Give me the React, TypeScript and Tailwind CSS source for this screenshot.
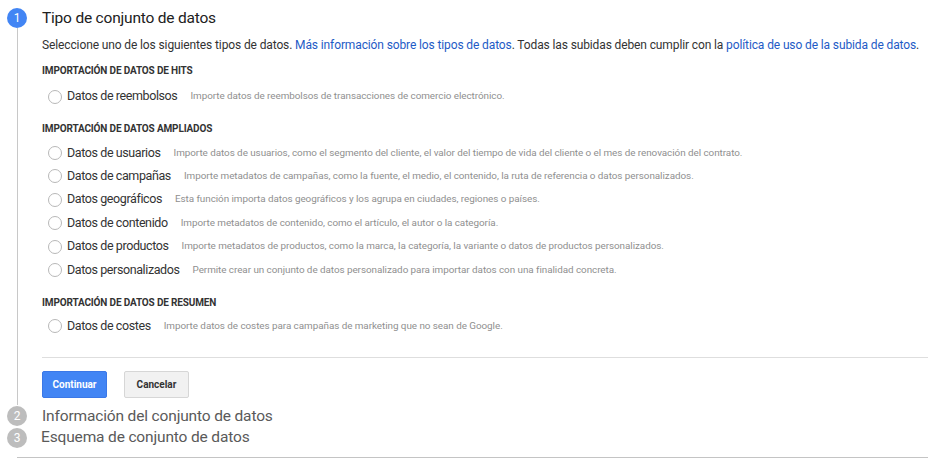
import React from 'react';

type Option = {label: string; desc: string};

const hits: Option[] = [
  {label: 'Datos de reembolsos', desc: 'Importe datos de reembolsos de transacciones de comercio electrónico.'},
];

const extended: Option[] = [
  {label: 'Datos de usuarios', desc: 'Importe datos de usuarios, como el segmento del cliente, el valor del tiempo de vida del cliente o el mes de renovación del contrato.'},
  {label: 'Datos de campañas', desc: 'Importe metadatos de campañas, como la fuente, el medio, el contenido, la ruta de referencia o datos personalizados.'},
  {label: 'Datos geográficos', desc: 'Esta función importa datos geográficos y los agrupa en ciudades, regiones o países.'},
  {label: 'Datos de contenido', desc: 'Importe metadatos de contenido, como el artículo, el autor o la categoría.'},
  {label: 'Datos de productos', desc: 'Importe metadatos de productos, como la marca, la categoría, la variante o datos de productos personalizados.'},
  {label: 'Datos personalizados', desc: 'Permite crear un conjunto de datos personalizado para importar datos con una finalidad concreta.'},
];

const summary: Option[] = [
  {label: 'Datos de costes', desc: 'Importe datos de costes para campañas de marketing que no sean de Google.'},
];

function RadioRow({label, desc}: Option) {
  return (
    <label className="flex items-center h-[23.4px] pl-[6px] cursor-pointer">
      <span className="w-[14px] h-[14px] rounded-full border border-[#b8b8b8] bg-white shrink-0" />
      <span className="ml-[5px] text-[12.5px] tracking-[-0.4px] text-[#333]">{label}</span>
      <span className="ml-[13px] text-[9.9px] tracking-[-0.05px] text-[#8f8f8f] whitespace-nowrap">{desc}</span>
    </label>
  );
}

function SectionTitle({children, className}: {children: React.ReactNode; className?: string}) {
  return <div className={'text-[10px] tracking-[-0.15px] leading-[14px] font-bold text-[#333] uppercase ' + (className || '')}>{children}</div>;
}

function StepCircle({n, active}: {n: number; active?: boolean}) {
  return (
    <div className={'w-[20px] h-[20px] rounded-full flex items-center justify-center text-[12px] text-white shrink-0 ' + (active ? 'bg-[#4285f4]' : 'bg-[#bdbdbd]')}>
      {n}
    </div>
  );
}

export default function App() {
  return (
    <div className="w-[928px] h-[472px] bg-white overflow-hidden pt-[8px]" style={{fontFamily: 'Roboto, "Liberation Sans", sans-serif'}}>
      {/* step 1 */}
      <div className="flex">
        <div className="w-[34px] flex flex-col items-center shrink-0">
          <StepCircle n={1} active />
          <div className="w-px flex-1 bg-[#c8c8c8]" />
        </div>
        <div className="flex-1 pl-[8px] pb-[7px]">
          <h2 className="text-[15.5px] tracking-[-0.2px] leading-[20px] text-[#212121]">Tipo de conjunto de datos</h2>
          <p className="mt-[8px] text-[12px] tracking-[-0.12px] leading-[18px] text-[#333] whitespace-nowrap">
            Seleccione uno de los siguientes tipos de datos.{' '}
            <a className="text-[#1e5bc6]">Más información sobre los tipos de datos</a>. Todas las subidas deben cumplir con la{' '}
            <a className="text-[#1e5bc6]">política de uso de la subida de datos</a>.
          </p>

          <SectionTitle className="mt-[10px]">Importación de datos de hits</SectionTitle>
          <div className="mt-[7px]">
            {hits.map(o => <RadioRow key={o.label} {...o} />)}
          </div>

          <SectionTitle className="mt-[14px]">Importación de datos ampliados</SectionTitle>
          <div className="mt-[5px]">
            {extended.map(o => <RadioRow key={o.label} {...o} />)}
          </div>

          <SectionTitle className="mt-[14px]">Importación de datos de resumen</SectionTitle>
          <div className="mt-[5px]">
            {summary.map(o => <RadioRow key={o.label} {...o} />)}
          </div>

          <div className="mt-[19px] h-px bg-[#dedede]" />

          <div className="mt-[13px] flex gap-[17px]">
            <button className="h-[27px] w-[65px] rounded-[2px] bg-[#4285f4] border border-[#3b78e7] text-white text-[10px] font-bold">
              Continuar
            </button>
            <button className="h-[27px] w-[65px] rounded-[2px] bg-[#f1f1f1] border border-[#d6d6d6] text-[#333] text-[10px] font-bold">
              Cancelar
            </button>
          </div>
        </div>
      </div>

      {/* step 2 */}
      <div className="flex items-center h-[22px]">
        <div className="w-[34px] flex justify-center shrink-0">
          <StepCircle n={2} />
        </div>
        <div className="pl-[8px] text-[15.5px] tracking-[-0.15px] text-[#5a5a5a]">Información del conjunto de datos</div>
      </div>

      {/* step 3 */}
      <div className="flex items-center h-[21px]">
        <div className="w-[34px] flex justify-center shrink-0">
          <StepCircle n={3} />
        </div>
        <div className="pl-[7px] text-[15.5px] tracking-[-0.15px] text-[#5a5a5a]">Esquema de conjunto de datos</div>
      </div>

      <div className="mt-[9px] ml-[17px] h-px bg-[#c4c4c4]" />
    </div>
  );
}
